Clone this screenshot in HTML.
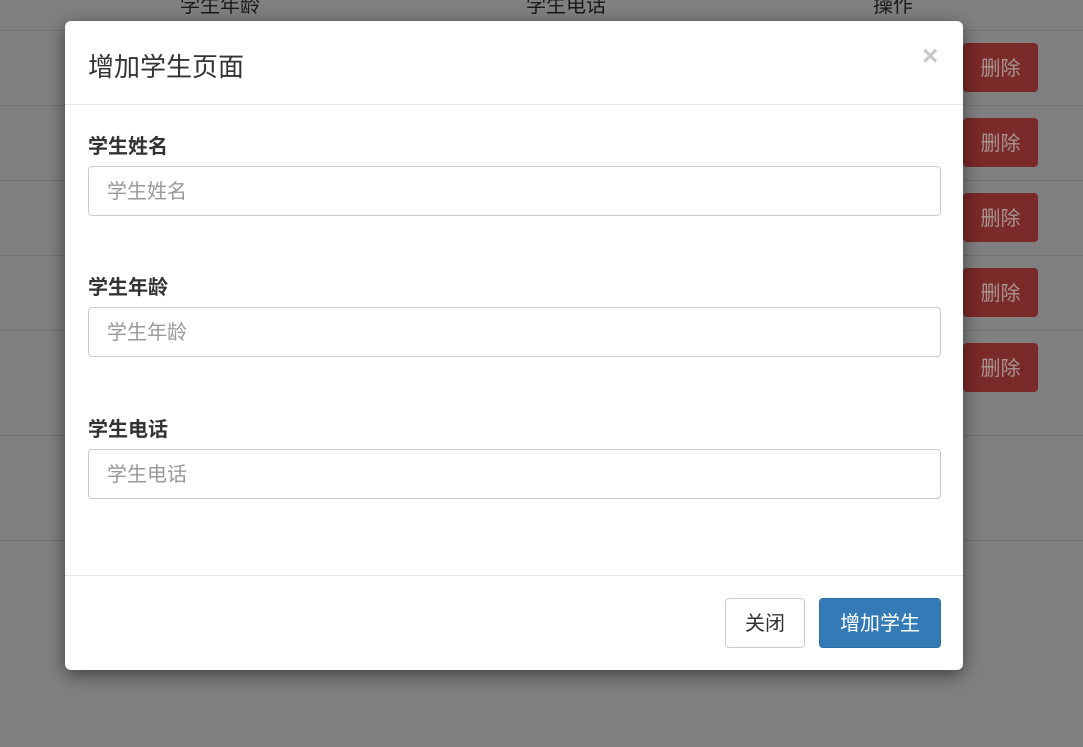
<!DOCTYPE html>
<html><head><meta charset="utf-8"><style>
body{margin:0;width:1083px;height:747px;background:#808080;position:relative;overflow:hidden;font-family:"Liberation Sans","Noto Sans CJK SC",sans-serif;}
.line{position:absolute;left:0;width:1083px;height:1px;background:#737373;}
.th{position:absolute;top:-11px;font-size:20px;color:#1a1a1a;}
.del{position:absolute;left:963px;width:75px;height:49px;background:#7a2a28;border-radius:4px;color:#a89594;font-size:20px;line-height:52px;text-align:center;}
.modal{position:absolute;left:65px;top:21px;width:898px;height:649px;background:#fff;border-radius:6px;box-shadow:0 5px 18px rgba(0,0,0,.5);}
.title{position:absolute;left:23px;top:26px;font-size:26px;color:#333;}
.x{position:absolute;left:857px;top:19px;font-size:28px;font-weight:bold;color:#c8c8c8;}
.hr{position:absolute;left:0;width:898px;height:1px;background:#e5e5e5;}
.lab{position:absolute;left:23px;font-size:20px;font-weight:bold;color:#333;}
.inp{position:absolute;left:23px;border:1px solid #ccc;border-radius:4px;font-size:20px;color:#999;line-height:50px;padding-left:18px;box-sizing:border-box;width:853px;height:50px;}
.btn{position:absolute;top:577px;height:50px;border-radius:4px;font-size:20px;line-height:50px;text-align:center;box-sizing:border-box;}
</style></head><body>
<div class="th" style="left:180px">学生年龄</div>
<div class="th" style="left:526px">学生电话</div>
<div class="th" style="left:873px">操作</div>
<div class="line" style="top:30px"></div>
<div class="line" style="top:105px"></div>
<div class="line" style="top:180px"></div>
<div class="line" style="top:255px"></div>
<div class="line" style="top:330px"></div>
<div class="line" style="top:435px"></div>
<div class="line" style="top:540px"></div>
<div class="del" style="top:43px">删除</div>
<div class="del" style="top:118px">删除</div>
<div class="del" style="top:193px">删除</div>
<div class="del" style="top:268px">删除</div>
<div class="del" style="top:343px">删除</div>
<div class="modal">
<div class="title">增加学生页面</div>
<div class="x">×</div>
<div class="hr" style="top:83px"></div>
<div class="lab" style="top:109px">学生姓名</div>
<div class="inp" style="top:145px">学生姓名</div>
<div class="lab" style="top:250px">学生年龄</div>
<div class="inp" style="top:286px">学生年龄</div>
<div class="lab" style="top:392px">学生电话</div>
<div class="inp" style="top:428px">学生电话</div>
<div class="hr" style="top:554px"></div>
<div class="btn" style="left:660px;width:80px;border:1px solid #ccc;color:#333;">关闭</div>
<div class="btn" style="left:754px;width:122px;background:#337ab7;border:1px solid #2e6da4;color:#fff;">增加学生</div>
</div>
</body></html>
